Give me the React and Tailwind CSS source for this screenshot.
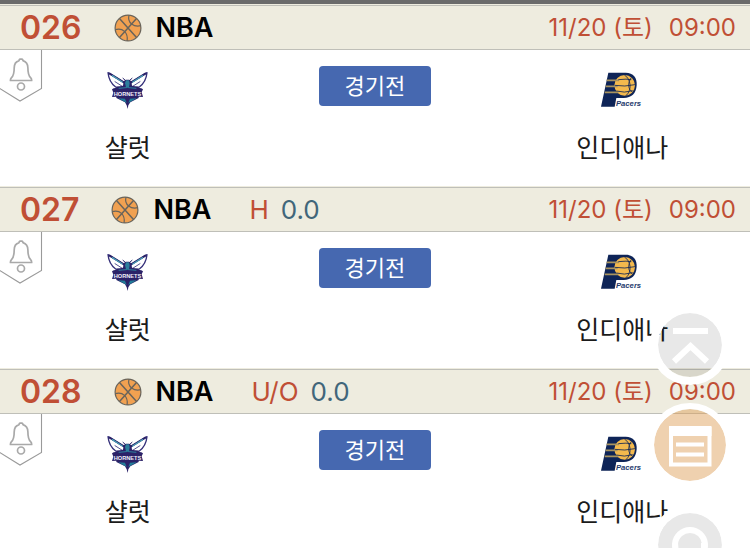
const games = [
  { id: '026', league: 'NBA', home: '샬럿', away: '인디애나', date: '11/20 (토)', time: '09:00' },
  { id: '027', league: 'NBA', type: 'H', line: '0.0', home: '샬럿', away: '인디애나', date: '11/20 (토)', time: '09:00' },
  { id: '028', league: 'NBA', type: 'U/O', line: '0.0', home: '샬럿', away: '인디애나', date: '11/20 (토)', time: '09:00' },
];

function BasketballIcon({ className }) {
  return (
    <svg viewBox="0 0 28 28" className={className} fill="none" stroke="#69645b" strokeWidth="1.2" aria-hidden="true">
      <circle cx="14" cy="14" r="12.9" fill="#f1a151" />
      <path d="M5.500 4.500L22.500 23.500M22.500 4.500L5.500 23.500" strokeWidth="1.5" />
      <path d="M15 1.200c-1 4 .2 7 2.600 8.800c2.600 2 6 2.500 9.200 1.700" />
      <path d="M1.200 15.600c3.600-1 7-.4 9.300 1.800c2.300 2.300 3.200 5.600 2.600 9.400" />
    </svg>
  );
}

function AlarmTag() {
  return (
    <svg viewBox="0 0 43 53" className="h-[53px] w-[43px]" fill="none" stroke="#9a9a9a" aria-hidden="true">
      <path d="M41.500 0V38.500L20 51L-1 38" fill="#fff" strokeWidth="1.100" />
      <g stroke="#a9a9a9" strokeWidth="1.700" strokeLinejoin="round">
        <path d="M21 8.800c-1.300 0-1.900.7-2 1.800c-3.300 1-4.800 3.800-4.800 7.400c0 5.800-.7 7.700-2.700 9.700c-.8.800-1.100 1.600-1.100 2.800h21.300c0-1.200-.3-2-1.100-2.800c-2-2-2.700-3.900-2.700-9.700c0-3.600-1.600-6.400-4.900-7.400c-.1-1.100-.7-1.800-2-1.800z" />
        <circle cx="21" cy="36.500" r="3.500" />
      </g>
    </svg>
  );
}

function HornetsLogo() {
  return (
    <svg viewBox="0 0 123 114" className="h-[38px] w-[41px]" aria-hidden="true">
      <g stroke="#35307a" strokeWidth="4" strokeLinejoin="round" fill="#fff">
        <path d="M3 5L56 38L48 50L26 48C12 38 5 24 3 5z" />
        <path d="M120 5L67 38L75 50L97 48C111 38 118 24 120 5z" />
      </g>
      <g fill="none" strokeLinecap="round">
        <path d="M8 8L54 36M115 8L69 36" stroke="#2b2268" strokeWidth="6" />
        <path d="M16 14L46 33M107 14L77 33" stroke="#4a9db5" strokeWidth="4" />
        <path d="M24 32L46 46M99 32L77 46" stroke="#55518f" strokeWidth="3" />
        <path d="M48 22l8 7M75 22l-8 7" stroke="#2b2268" strokeWidth="3" />
      </g>
      <path d="M50 31l6-5h11l6 5l2 13l20 4v33L70 94l-6 9l-2 11l-3-11l-5-9L28 81V48l20-4z" fill="#2b2268" />
      <path d="M57 28h9l2 8l-2 13h-9l-3-13z" fill="#2c7f9c" />
      <path d="M34 82l20 1l5 13zM89 82l-20 1l-5 13z" fill="#217d98" />
      <path d="M20 52q41-8 83 0l5 3l-4 9l4 14q-47-5-93 0l4-13l-4-10z" fill="#2b2268" />
      <path d="M35 52q26-5 53 0" stroke="#2c7f9c" strokeWidth="3" fill="none" />
      <text x="61.500" y="74" textAnchor="middle" fontFamily="Liberation Sans" fontWeight="700" fontSize="17" fill="#efeff8">
        HORNETS
      </text>
    </svg>
  );
}

function PacersLogo() {
  return (
    <svg viewBox="0 0 126 108" className="h-9 w-[42px]" aria-hidden="true">
      <path d="M22 2H74C97 2 109 17 107 40C105 65 92 78 68 78H46L41 104H0z" fill="#0e2457" />
      <circle cx="71" cy="40" r="31" fill="#f3b94d" />
      <path d="M17 25H54M14 43H50M11 61H52" stroke="#a8935f" strokeWidth="5" />
      <g fill="none" stroke="#0e2457" strokeWidth="2.500">
        <path d="M52 23Q78 20 91 23M41 40Q71 45 102 38M46 57Q70 64 95 56" />
        <path d="M70 9C90 20 94 54 75 71M91 17C80 30 80 52 94 60" />
      </g>
      <text x="45" y="103" fontFamily="Liberation Sans Narrow, Liberation Sans" fontWeight="700" fontStyle="italic" fontSize="23" fill="#24396c">
        Pacers
      </text>
    </svg>
  );
}

function Team({ logo, name }) {
  return (
    <div className="flex flex-col items-center pt-1">
      <div className="flex h-10 items-center justify-center">{logo}</div>
      <p className="mt-5 text-[25px] leading-9 text-[#1b1b1b]">{name}</p>
    </div>
  );
}

function Game({ game }) {
  return (
    <section>
      <header className="border-b border-[#bfbfb8] bg-[#eeecdf] pt-px">
        <div className="flex h-11 items-center justify-between border-t border-[#bfbfb8] pr-[14px] pl-5 whitespace-nowrap">
          <div className="flex items-center">
            <span className="text-[32px] leading-10 font-semibold text-[#c04f35]">{game.id}</span>
            <BasketballIcon className="ml-8 size-7" />
            <h2 className="ml-3.5 text-[27px] leading-10 font-semibold text-black">{game.league}</h2>
            {game.type && (
              <p className="ml-[38px] flex gap-3 text-[26px] leading-10">
                <span className="text-[#c04f35]">{game.type}</span>
                <span className="text-[#41667a]">{game.line}</span>
              </p>
            )}
          </div>
          <p className="flex gap-4 text-2xl text-[#c04f35]">
            <span>{game.date}</span>
            <span>{game.time}</span>
          </p>
        </div>
      </header>

      <div className="relative grid grid-cols-3 px-1 pt-4 pb-5">
        <button className="absolute top-0 left-0" aria-label="알림">
          <AlarmTag />
        </button>
        <Team logo={<HornetsLogo />} name={game.home} />
        <div className="flex justify-center">
          <button className="h-10 w-28 rounded bg-[#4668b0] text-[22px] leading-10 text-white">경기전</button>
        </div>
        <Team logo={<PacersLogo />} name={game.away} />
      </div>
    </section>
  );
}

// rings are opaque white, the discs let the list show through
function FloatingButtons() {
  return (
    <nav className="fixed top-[305px] right-[18px] flex flex-col items-center gap-[18px]">
      <button aria-label="맨 위로" className="size-20 rounded-full border-8 border-white bg-black/9 bg-clip-padding">
        <svg viewBox="0 0 64 64" className="size-16" fill="none" stroke="#fff" strokeWidth="6">
          <path d="M15 18H50M16 48.500L32.500 33L49 48.500" />
        </svg>
      </button>
      <button aria-label="목록" className="size-[84px] rounded-full border-6 border-white bg-[#dd9e57]/48 bg-clip-padding">
        <svg viewBox="0 0 72 72" className="size-[72px]" fill="none" stroke="#fff">
          <path d="M17 18V55.500H55.500V18" strokeWidth="4" />
          <path d="M15 22H57.500" strokeWidth="10" />
          <path d="M22 35.500H50M22 45.500H50" strokeWidth="4" />
        </svg>
      </button>
      <button aria-label="새로고침" className="size-20 rounded-full border-8 border-white bg-black/9 bg-clip-padding">
        <svg viewBox="0 0 64 64" className="size-16" fill="none" stroke="#fff" strokeWidth="6">
          <path d="M20 41A15 15 0 1 1 44 41" />
          <path d="M36 40h10v-10" />
        </svg>
      </button>
    </nav>
  );
}

export default function App() {
  return (
    <main className="h-screen overflow-hidden bg-white font-['Inter','Noto_Sans_CJK_KR',sans-serif]">
      <div className="h-1 bg-[#6b6b6b]" />
      {games.map((game) => (
        <Game key={game.id} game={game} />
      ))}
      <FloatingButtons />
    </main>
  );
}
